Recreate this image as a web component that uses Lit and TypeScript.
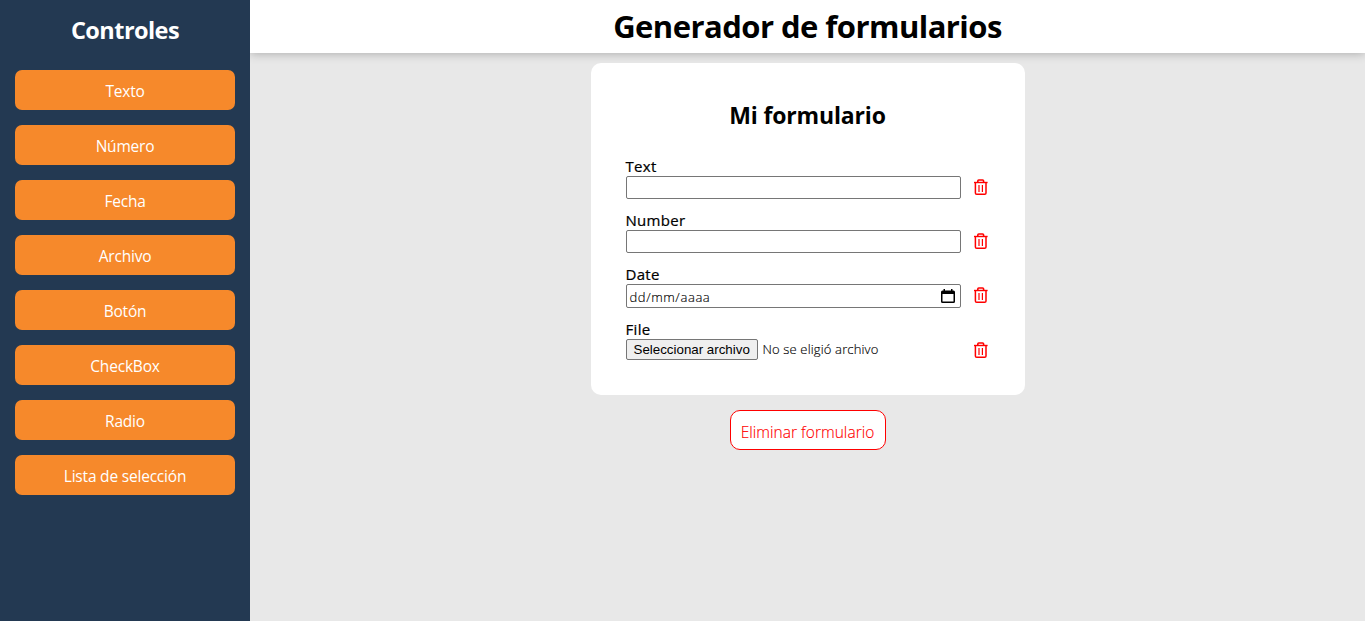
import { LitElement, html, css, svg } from "lit";
import { customElement } from "lit/decorators.js";

const CONTROLS = ["Texto", "Número", "Fecha", "Archivo", "Botón", "CheckBox", "Radio", "Lista de selección"];

@customElement("trash-icon")
class TrashIcon extends LitElement {
  static styles = css`
    :host { display: block; width: 16px; height: 18px; }
    svg { display: block; }
  `;
  render() {
    return html`<svg width="16" height="18" viewBox="0 0 16 18" fill="none" stroke="#ff0000">
      ${svg`<path d="M1 4.5H14.6" stroke-width="1.4"/>
      <path d="M4.8 4V3Q4.8 2 5.8 2H9.6Q10.6 2 10.6 3V4" stroke-width="1.6"/>
      <path d="M2.4 4.5V15Q2.4 16.3 3.7 16.3H11.7Q13 16.3 13 15V4.5" stroke-width="1.5"/>
      <path d="M6 7V14M9.4 7V14" stroke-width="1.2"/>`}
    </svg>`;
  }
}

@customElement("form-row")
class FormRow extends LitElement {
  static properties = { label: {} };
  declare label: string;
  static styles = css`
    :host { display: grid; grid-template-columns: 335px 16px; column-gap: 12px; align-items: start; }
    .label {
      grid-column: 1 / -1; height: 19px; line-height: 19px;
      font-size: 15px; letter-spacing: 0.3px; -webkit-text-stroke: 0.22px #000;
    }
    .icon { height: 20px; padding-top: 2px; margin-bottom: -2px; }
  `;
  render() {
    return html`<div class="label">${this.label}</div><slot></slot><div class="icon"><trash-icon></trash-icon></div>`;
  }
}

@customElement("app-root")
class AppRoot extends LitElement {
  static styles = css`
    :host {
      display: grid; grid-template-columns: 250px 1fr; height: 621px; overflow: hidden;
      background: #e8e8e8; color: #000; font-family: "Open Sans", "Noto Sans", sans-serif;
    }
    * { box-sizing: border-box; }
    h1, h2 { margin: 0; font-weight: 700; white-space: nowrap; text-align: center; }
    aside { background: #233952; padding: 15px; z-index: 1; }
    aside h2 { color: #fff; font-size: 23.5px; line-height: 30px; height: 55px; letter-spacing: -0.55px; }
    nav { display: grid; gap: 15px; }
    .control {
      height: 40px; border-radius: 7px; background: #f6892b; color: #fff; text-align: center;
      font-size: 15.5px; line-height: 43px; letter-spacing: -0.2px;
    }
    header { height: 53px; background: #fff; box-shadow: 0 0 10px rgba(0, 0, 0, 0.3); }
    h1 { font-size: 31px; line-height: 52px; letter-spacing: -0.54px; }
    main { display: flex; flex-direction: column; align-items: center; }
    .page { min-width: 0; }
    .card {
      width: 434px; height: 332px; margin-top: 10px; padding: 35px; border-radius: 10px;
      background: #fff;
    }
    .card h2 { font-size: 23px; line-height: 34px; height: 59px; letter-spacing: -0.15px; }
    .rows { display: grid; row-gap: 12px; }
    .box {
      height: 23px; border: 1px solid #767676; border-radius: 2px; background: #fff;
    }
    .date {
      height: 24px; display: flex; align-items: center; justify-content: space-between;
      padding: 0 5px 0 3px; font-size: 13px; line-height: 24px;
    }
    .file { display: flex; align-items: center; height: 21px; font-size: 13px; font-weight: 300; }
    .pick {
      height: 21px; width: 132px; margin-right: 5px; border: 1px solid #767676; border-radius: 2px;
      background: #efefef; padding-left: 7px; line-height: 19px; font-weight: 400;
      font-family: "Liberation Sans", Arial, sans-serif; font-size: 13.333px; white-space: nowrap;
    }
    .hint {
      white-space: nowrap; line-height: 21px; height: 21px; letter-spacing: 0.15px;
      -webkit-text-stroke: 0.15px #000;
    }
    .mask { font-weight: 300; letter-spacing: 0.6px; padding-top: 1px; -webkit-text-stroke: 0.15px #000; }
    .remove {
      width: 156px; height: 40px; margin-top: 15px; border: 1px solid #f00; border-radius: 10px;
      background: #fff; color: #f00; text-align: center; font-weight: 300; font-size: 15.5px;
      line-height: 43px; white-space: nowrap; letter-spacing: 0.03px; -webkit-text-stroke: 0.15px #f00;
    }
  `;
  render() {
    return html`
      <aside>
        <h2>Controles</h2>
        <nav>${CONTROLS.map((c) => html`<div class="control"><span>${c}</span></div>`)}</nav>
      </aside>
      <div class="page">
        <header><h1>Generador de formularios</h1></header>
        <main>
          <section class="card">
            <h2>Mi formulario</h2>
            <div class="rows">
              <form-row .label=${"Text"}><div class="box"></div></form-row>
              <form-row .label=${"Number"}><div class="box"></div></form-row>
              <form-row .label=${"Date"}>
                <div class="box date">
                  <span class="mask">dd/mm/aaaa</span>
                  <svg width="14" height="15" viewBox="0 0 14 15">
                    <path d="M2.5 0H4V1.5H10V0H11.5V1.5H12.5Q14 1.5 14 3V12.5Q14 14 12.5 14H1.5Q0 14 0 12.5V3Q0 1.5 1.5 1.5H2.5ZM1.5 5V12.5H12.5V5Z" fill="#000" fill-rule="evenodd"/>
                  </svg>
                </div>
              </form-row>
              <form-row .label=${"File"}>
                <div class="file"><span class="pick">Seleccionar archivo</span><span class="hint">No se eligió archivo</span></div>
              </form-row>
            </div>
          </section>
          <div class="remove">Eliminar formulario</div>
        </main>
      </div>
    `;
  }
}
